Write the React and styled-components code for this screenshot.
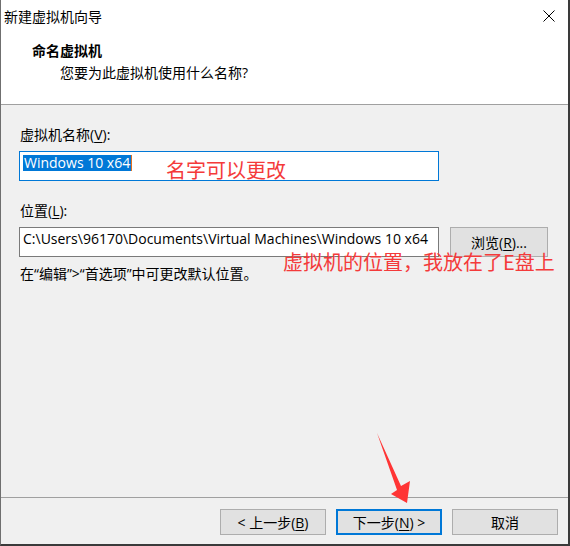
import React from "react";
import styled, { createGlobalStyle } from "styled-components";

const GlobalStyle = createGlobalStyle`
  html, body {
    margin: 0;
    padding: 0;
    background: #ffffff;
  }
  body {
    font-family: "Open Sans", "Noto Sans CJK SC", sans-serif;
    font-size: 14px;
    color: #000;
  }
  * {
    box-sizing: border-box;
  }
`;

const Window = styled.div`
  position: relative;
  width: 570px;
  height: 546px;
  display: flex;
  flex-direction: column;
  border-left: 1px solid #6f6f6f;
  border-right: 2px solid #3a3a3a;
  border-bottom: 2px solid #3a3a3a;
  background: #f0f0f0;
  overflow: hidden;
`;

const TitleBar = styled.div`
  height: 31px;
  display: flex;
  align-items: center;
  justify-content: space-between;
  padding: 0 13px 0 3px;
  background: #ffffff;
  font-size: 14px;
`;

const CloseIcon = styled.svg`
  display: block;
`;

const Header = styled.div`
  height: 74px;
  padding: 10px 0 0 31px;
  background: #ffffff;
  border-bottom: 1px solid #a0a0a0;
`;

const HeaderTitle = styled.div`
  font-weight: bold;
  line-height: 20px;
`;

const HeaderSub = styled.div`
  margin-top: 2px;
  padding-left: 28px;
  line-height: 20px;
`;

const Body = styled.div`
  flex: 1;
  padding: 20px 0 0 18px;
`;

const Label = styled.div`
  line-height: 20px;
  padding-left: 1px;
  margin-top: ${(p) => p.$top || 0}px;

  u {
    text-decoration: underline;
    text-underline-offset: 2px;
  }
`;

const Row = styled.div`
  position: relative;
  display: flex;
  gap: 11px;
  margin-top: 6px;
`;

const TextBox = styled.div`
  width: 420px;
  height: 30px;
  padding: 1px 0 0 3px;
  background: #ffffff;
  border: 1px solid ${(p) => (p.$focused ? "#0078d7" : "#7a7a7a")};
  line-height: 20px;
  white-space: nowrap;
  overflow: hidden;
`;

const Selected = styled.span`
  display: inline-block;
  background: #0078d7;
  color: #ffffff;
  line-height: 16px;
  margin-top: 1px;
  padding: 0 1px;
  border-right: 1px solid #e07020;
`;

const Note = styled.span`
  position: absolute;
  left: ${(p) => p.$left}px;
  top: ${(p) => p.$top}px;
  color: #f43a3a;
  font-family: "Noto Sans CJK SC", sans-serif;
  font-size: 20px;
  line-height: 24px;
  white-space: nowrap;
`;

const Button = styled.div`
  width: ${(p) => p.$w || 106}px;
  height: ${(p) => p.$h || 26}px;
  display: flex;
  align-items: center;
  justify-content: center;
  background: #e1e1e1;
  border: ${(p) => (p.$default ? "2px solid #0078d7" : "1px solid #adadad")};
  white-space: nowrap;

  u {
    text-decoration: underline;
    text-underline-offset: 2px;
  }
`;

const Hint = styled.div`
  margin-top: 7px;
  padding-left: 1px;
  line-height: 20px;
`;

const Footer = styled.div`
  height: 47px;
  display: flex;
  justify-content: flex-end;
  gap: 10px;
  padding: 11px 10px 0 0;
  border-top: 1px solid #a0a0a0;
`;

const Arrow = styled.svg`
  position: absolute;
  left: 0;
  top: 0;
  pointer-events: none;
`;

export default function App() {
  return (
    <>
      <GlobalStyle />
      <Window>
        <TitleBar>
          <span>新建虚拟机向导</span>
          <CloseIcon width="12" height="12" viewBox="0 0 12 12">
            <path d="M0.5 0.5 L11.5 11.5 M11.5 0.5 L0.5 11.5" stroke="#000" strokeWidth="1" />
          </CloseIcon>
        </TitleBar>
        <Header>
          <HeaderTitle>命名虚拟机</HeaderTitle>
          <HeaderSub>您要为此虚拟机使用什么名称?</HeaderSub>
        </Header>
        <Body>
          <Label>
            虚拟机名称(<u>V</u>):
          </Label>
          <Row>
            <TextBox $focused>
              <Selected>Windows 10 x64</Selected>
            </TextBox>
            <Note $left={147} $top={7}>名字可以更改</Note>
          </Row>
          <Label $top={20}>
            位置(<u>L</u>):
          </Label>
          <Row>
            <TextBox>C:\Users\96170\Documents\Virtual Machines\Windows 10 x64</TextBox>
            <Button $w={98} $h={30}>
              浏览(<u>R</u>)...
            </Button>
            <Note $left={264} $top={23}>虚拟机的位置，我放在了E盘上</Note>
          </Row>
          <Hint>在“编辑”&gt;“首选项”中可更改默认位置。</Hint>
        </Body>
        <Footer>
          <Button>
            &lt; 上一步(<u>B</u>)
          </Button>
          <Button $default>
            下一步(<u>N</u>) &gt;
          </Button>
          <Button>取消</Button>
        </Footer>
        <Arrow width="570" height="546" viewBox="0 0 570 546">
          <polygon
            points="376,433 400,486 409,481 406,503 390,494 396,490"
            fill="#ff3535"
          />
        </Arrow>
      </Window>
    </>
  );
}
